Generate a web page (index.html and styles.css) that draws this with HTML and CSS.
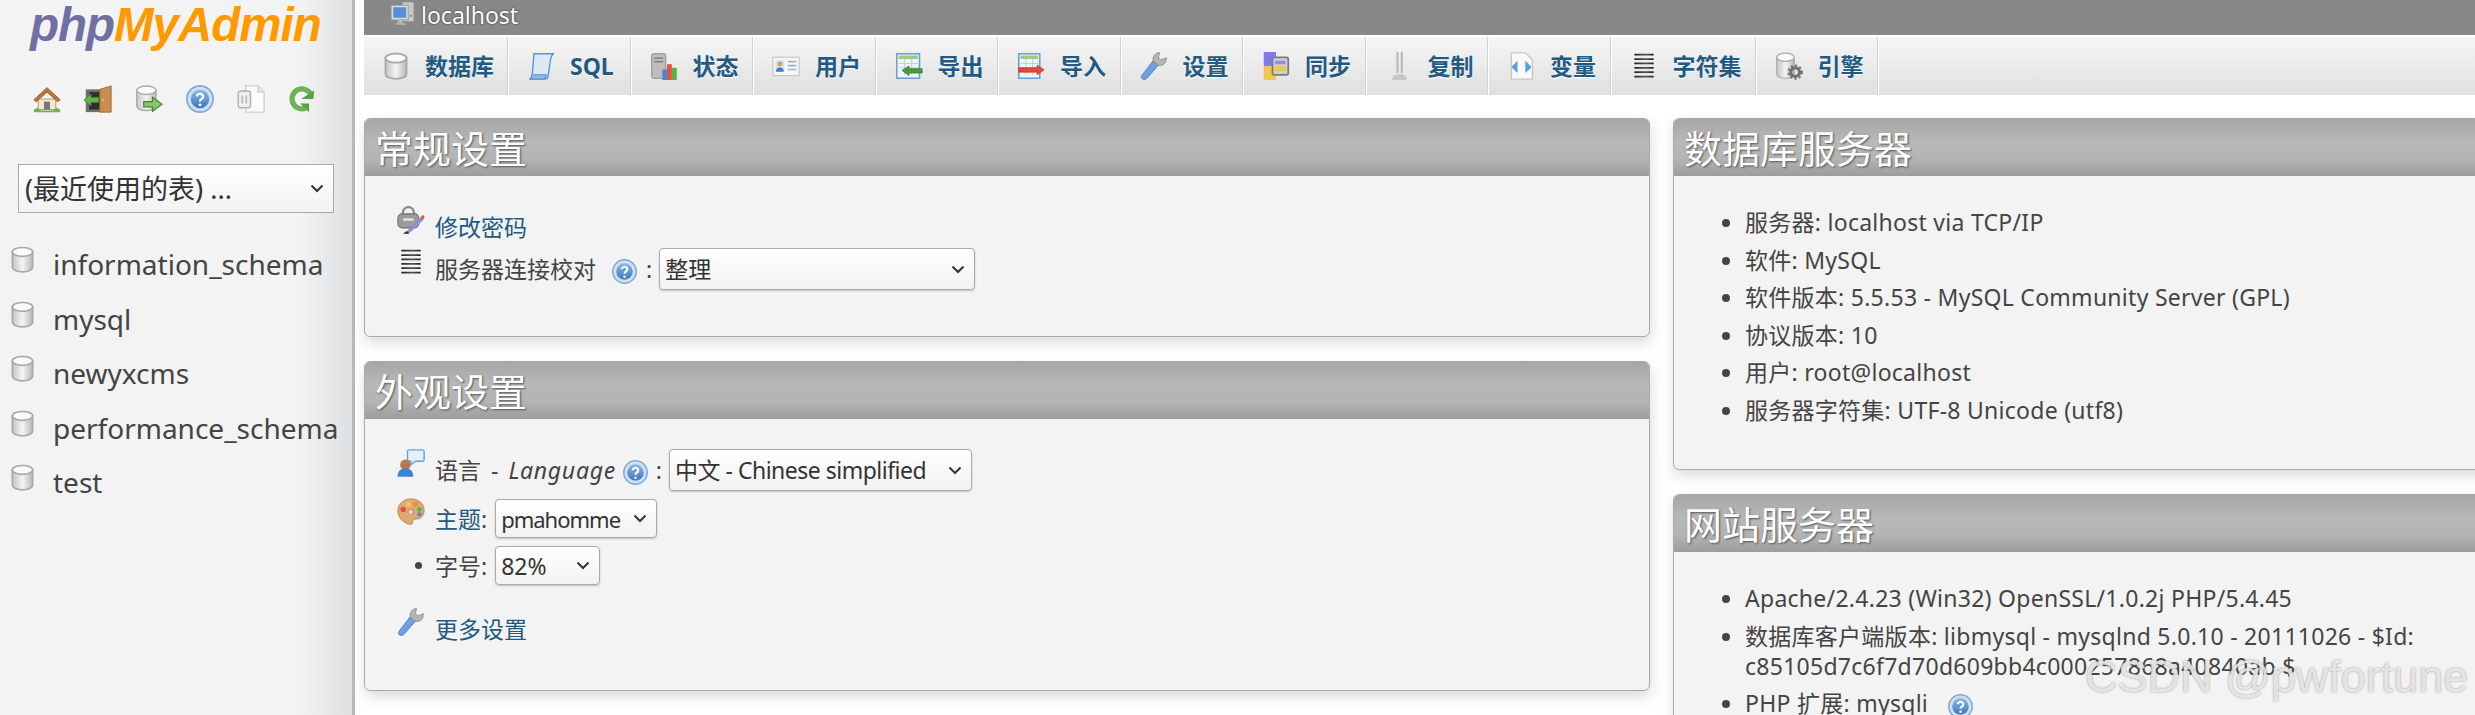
FILE: index.html
```html
<!DOCTYPE html>
<html lang="zh-CN">
<head>
    <meta charset="UTF-8">
    <title>localhost / phpMyAdmin</title>
    <link rel="stylesheet" href="styles.css">
</head>
<body>
    <svg class="icon-defs" xmlns="http://www.w3.org/2000/svg">
        <defs>
            <linearGradient id="g-db" x1="0" x2="1" y1="0" y2="0">
                <stop offset="0" stop-color="#c4c4c4"/>
                <stop offset=".5" stop-color="#f4f4f4"/>
                <stop offset="1" stop-color="#b8b8b8"/>
            </linearGradient>
            <linearGradient id="g-help" x1="0" x2="0" y1="0" y2="1">
                <stop offset="0" stop-color="#8fb8e6"/>
                <stop offset="1" stop-color="#3c78b8"/>
            </linearGradient>
            <linearGradient id="g-lines" x1="0" x2="1" y1="0" y2="0">
                <stop offset="0" stop-color="#222"/>
                <stop offset=".6" stop-color="#555"/>
                <stop offset="1" stop-color="#222"/>
            </linearGradient>
            <symbol id="i-db" viewBox="0 0 16 16">
                <path d="M2 3.500v9c0 1.600 2.700 2.800 6 2.800s6-1.200 6-2.800v-9z" fill="url(#g-db)" stroke="#a8a8a8"/>
                <ellipse cx="8" cy="3.500" rx="6" ry="2.600" fill="#fafafa" stroke="#a8a8a8"/>
            </symbol>
            <symbol id="i-home" viewBox="0 0 16 16">
                <path d="M3 8v6h10V8z" fill="#f1e7d4" stroke="#b49a72" stroke-width=".6"/>
                <path d="M0.500 8.500 8 1.500l7.500 7-1.500 1L8 4 2 9.500z" fill="#b9793c" stroke="#8d5826" stroke-width=".5"/>
                <rect x="6.300" y="9.500" width="3.400" height="4.500" fill="#777"/>
                <path d="M0.500 15.500v-1.500l2-1 2 1.500h7l2-1.500 2 1v1.500z" fill="#69b84f"/>
            </symbol>
            <symbol id="i-exit" viewBox="0 0 16 16">
                <rect x="1" y="2.500" width="9" height="13" fill="#6f6f6f"/>
                <rect x="3" y="4" width="7" height="10" fill="#2f2f2f"/>
                <path d="M9 2.500 15.500.5v15H9z" fill="#c98d50" stroke="#9a6430" stroke-width=".5"/>
                <circle cx="10.800" cy="8.500" r=".5" fill="#f7e36b"/>
                <path d="M0 8.500 4 5v2h4.500v3H4v2z" fill="#67b24a" stroke="#38802a" stroke-width=".5"/>
            </symbol>
            <symbol id="i-dbgo" viewBox="0 0 16 16">
                <path d="M1 3v9c0 1.500 2.500 2.600 5.500 2.600S12 13.500 12 12V3z" fill="url(#g-db)" stroke="#aaa" stroke-width=".8"/>
                <ellipse cx="6.500" cy="3" rx="5.500" ry="2.400" fill="#fafafa" stroke="#aaa" stroke-width=".8"/>
                <path d="M5 9.500h5V7l5.500 4-5.500 4v-2.500H5z" fill="#8cc46c" stroke="#3f8a2c" stroke-width=".7"/>
            </symbol>
            <symbol id="i-help" viewBox="0 0 16 16">
                <circle cx="8" cy="8" r="7.500" fill="#cfe0f2" stroke="#7fa9d8"/>
                <circle cx="8" cy="8" r="5.300" fill="url(#g-help)"/>
                <path d="M6.200 6.500a1.800 1.600 0 1 1 2.700 1.500c-.7.400-.9.700-.9 1.400" fill="none" stroke="#fff" stroke-width="1.300"/>
                <circle cx="8" cy="11.300" r=".8" fill="#fff"/>
            </symbol>
            <symbol id="i-copy" viewBox="0 0 16 16">
                <path d="M5 .5h7l3.500 3.500v11.500H5z" fill="#fbfbfb" stroke="#c9d2da" stroke-width=".8"/>
                <path d="M12 .5V4h3.500" fill="#e6e6e6" stroke="#c9d2da" stroke-width=".8"/>
                <rect x=".7" y="3.500" width="7" height="9.500" rx="1.300" fill="#efefef" stroke="#b5b5b5" stroke-width=".9"/>
                <path d="M3 6v4.500M5.300 6v4.500" stroke="#bbb"/>
            </symbol>
            <symbol id="i-reload" viewBox="0 0 16 16">
                <path d="M13 5.200A5.700 5.700 0 1 0 10 13.300" fill="none" stroke="#6cb257" stroke-width="3"/>
                <path d="M7.500 8h7L15 3zM7 10.500l5 5v-5z" fill="#58a246"/>
            </symbol>
            <symbol id="i-server" viewBox="0 0 16 16">
                <rect x="8" y="0" width="7" height="12" fill="#c9c9c9" stroke="#999" stroke-width=".5"/>
                <rect x="1" y="2" width="10.500" height="9" fill="#dcdcdc" stroke="#9a9a9a" stroke-width=".6"/>
                <rect x="2.300" y="3.200" width="8" height="6.500" fill="#5a8fd6"/>
                <path d="M5 11h3v2h2v1H3.500v-1H5z" fill="#b5b5b5"/>
                <circle cx="13.200" cy="8.500" r=".7" fill="#57b04a"/>
            </symbol>
            <symbol id="i-sql" viewBox="0 0 16 16">
                <path d="M4 1h11c-.8.800-1.300 1.600-1.500 3L12 14c-.3 1-1 1.500-2 1.500H1.500c1-.5 1.300-1.300 1.500-2.500z" fill="#dbe9f8" stroke="#5a93cf" stroke-width=".8"/>
                <path d="M1.500 15.500c1-.5 1.300-1.500 1.500-2.500h8l-.3 1c-.2 1-1 1.500-1.700 1.500z" fill="#8db8e4" stroke="#5a93cf" stroke-width=".6"/>
            </symbol>
            <symbol id="i-status" viewBox="0 0 16 16">
                <rect x="1" y="1" width="8" height="14" rx="1" fill="#bdbdbd" stroke="#8f8f8f" stroke-width=".6"/>
                <path d="M2.500 3.500h5M2.500 5.500h5" stroke="#777" stroke-width=".7"/>
                <rect x="7" y="10" width="2.700" height="6" fill="#4a86d8"/>
                <rect x="9.700" y="7" width="2.800" height="9" fill="#e2533f"/>
                <rect x="12.500" y="9" width="2.800" height="7" fill="#55b14a"/>
            </symbol>
            <symbol id="i-user" viewBox="0 0 16 16">
                <rect x=".5" y="3" width="15" height="10.500" fill="#f6f6f6" stroke="#c8c8c8" stroke-width=".7"/>
                <rect x="2" y="4.800" width="5" height="6.500" fill="#cfe0ee"/>
                <circle cx="4.500" cy="6.800" r="1.400" fill="#dd9a5a"/>
                <path d="M2.300 11.300c0-1.600 1-2.400 2.200-2.400s2.200.8 2.200 2.400z" fill="#3f7cc4"/>
                <path d="M9 5.500h5M9 7.800h5M9 10h5" stroke="#9db4c8" stroke-width=".9"/>
            </symbol>
            <symbol id="i-export" viewBox="0 0 16 16">
                <rect x="1" y="1" width="13" height="14" fill="#eef5fb" stroke="#6b9fd4" stroke-width=".9"/>
                <rect x="2" y="2" width="11" height="2" fill="#9ccc84"/>
                <path d="M2 6.500h11M2 9h11M5.500 4v9M9.500 4v9" stroke="#b5c9dc" stroke-width=".5"/>
                <path d="M4 10.500 8 8v1.500h7.500v2.500H8v1.500z" fill="#4f9a3a" stroke="#2f7a24" stroke-width=".4"/>
            </symbol>
            <symbol id="i-import" viewBox="0 0 16 16">
                <rect x="1" y="1" width="12" height="14" fill="#eef5fb" stroke="#6b9fd4" stroke-width=".9"/>
                <rect x="2" y="2" width="10" height="2" fill="#9ccc84"/>
                <path d="M2 6.500h10M2 9h10M5 4v9M9 4v9" stroke="#b5c9dc" stroke-width=".5"/>
                <path d="M1 9h10.500V7.500l4 2.700-4 2.800V11.500H1z" fill="#e24a3b" stroke="#b92f22" stroke-width=".4"/>
            </symbol>
            <symbol id="i-wrench" viewBox="0 0 16 16">
                <path d="M1 13.500 7.500 5l3 2.500L4 15c-1.500 1.500-4 .3-3-1.500z" fill="#6f9fe0" stroke="#4f7fc0" stroke-width=".5"/>
                <path d="M7.500 5c-.4-2 .8-4.500 3.700-4.700L10.500 3l1.500 1.500 3-1.200c.3 3-2 5-4.700 4.300z" fill="#b5b5b5" stroke="#8c8c8c" stroke-width=".5"/>
            </symbol>
            <symbol id="i-sync" viewBox="0 0 16 16">
                <rect x="1" y="0" width="7" height="8" fill="#7f7af0"/>
                <rect x="1" y="8" width="7" height="8" fill="#f0c64f"/>
                <rect x="6" y="3" width="9" height="10" rx="1" fill="#cfcfcf" stroke="#7c7c7c"/>
                <rect x="7.500" y="5" width="6" height="2" fill="#8f8af0"/>
                <rect x="7.500" y="8" width="6" height="3" fill="#f0c64f"/>
            </symbol>
            <symbol id="i-repl" viewBox="0 0 16 16">
                <path d="M6.500 0h1.200v12H6.500zM9 0h1.200v12H9z" fill="#b9b9b9"/>
                <path d="M4 16c0-2 1.500-3.500 4.300-3.500S12.500 14 12.500 16z" fill="#c7c7c7"/>
            </symbol>
            <symbol id="i-vars" viewBox="0 0 16 16">
                <path d="M2.500 .5h8l4 4v11h-12z" fill="#fafafa" stroke="#c8c8c8" stroke-width=".8"/>
                <path d="M6 5 2.500 8.500 6 12zM10.500 5 14 8.500 10.500 12z" fill="#4da0e8"/>
            </symbol>
            <symbol id="i-lines" viewBox="0 0 16 16">
                <path d="M2.500 1h11v1h-11zM2.500 3.500h11v1h-11zM2.500 6h11v1h-11zM2.500 8.500h11v1h-11zM2.500 11h11v1h-11zM2.500 13.500h11v1h-11z" fill="url(#g-lines)"/>
            </symbol>
            <symbol id="i-engine" viewBox="0 0 16 16">
                <path d="M1 3v9.500c0 1.400 2.200 2.500 5 2.500s5-1.100 5-2.500V3z" fill="url(#g-db)" stroke="#aaa" stroke-width=".7"/>
                <ellipse cx="6" cy="3" rx="5" ry="2.300" fill="#fafafa" stroke="#aaa" stroke-width=".7"/>
                <circle cx="11.500" cy="11.500" r="2.500" fill="none" stroke="#6f6f6f" stroke-width="1.800"/>
                <circle cx="11.500" cy="11.500" r="3.900" fill="none" stroke="#6f6f6f" stroke-width="1" stroke-dasharray="1.300 1.300"/>
            </symbol>
            <symbol id="i-lock" viewBox="0 0 16 16">
                <path d="M3.300 5V3.800a3.200 3.200 0 0 1 6.400 0V5" fill="none" stroke="#8a8a8a" stroke-width="1.300"/>
                <rect x=".5" y="4.500" width="12" height="8" rx="2.500" fill="#9c9c9c" stroke="#6d6d6d" stroke-width=".6"/>
                <rect x="3.500" y="7" width="6" height="1.500" fill="#e0e0e0"/>
                <path d="M5 15 13.500 6.500l1.500 1.500L7 15.500z" fill="#8f8fd8"/>
                <path d="M13.300 6.700l1.500-1.700 1 1.300-1 1.800z" fill="#e2533f"/>
                <path d="M3.500 15.800h3.500l-1.500-1.500z" fill="#222"/>
            </symbol>
            <symbol id="i-lang" viewBox="0 0 16 16">
                <path d="M6 1.500C6 .8 6.500.5 7 .5h7.500c.6 0 1 .4 1 1v4.500c0 .6-.4 1-1 1H10.500L8 9V7H7c-.6 0-1-.4-1-1z" fill="#e6f0fb" stroke="#6b9fd4" stroke-width=".8"/>
                <circle cx="4.800" cy="9" r="3" fill="#b9794a"/>
                <path d="M.3 15.800c0-3.300 1.900-4.800 4.500-4.800s4.500 1.500 4.500 4.800z" fill="#3f82d8"/>
            </symbol>
            <symbol id="i-palette" viewBox="0 0 16 16">
                <path d="M8 .5c4.500 0 7.500 2.800 7.500 6.500 0 3.500-2.300 5-4.500 5-1.300 0-2 .4-2 1.500 0 1-.8 2-2 1.500C3 14 .5 10.500.5 7.500.5 3.300 4 .5 8 .5z" fill="#dfa873" stroke="#b47f4d" stroke-width=".5"/>
                <circle cx="3.500" cy="6.500" r="1.500" fill="#e2533f"/>
                <circle cx="6.500" cy="3.500" r="1.500" fill="#f0c64f"/>
                <circle cx="10.500" cy="3.500" r="1.500" fill="#f08f3f"/>
                <circle cx="12.800" cy="6.500" r="1.400" fill="#55b14a"/>
                <circle cx="12.800" cy="9.300" r="1.200" fill="#4a86d8"/>
                <circle cx="7.800" cy="8" r="1.500" fill="#eed9bf" stroke="#a77" stroke-width=".4"/>
            </symbol>
        </defs>
    </svg>

    <div class="page">
        <aside class="sidebar">
            <div class="logo"><span class="logo-php">php</span><span class="logo-my">MyAdmin</span></div>
            <div class="quick-links">
                <svg class="icon"><use href="#i-home"/></svg>
                <svg class="icon"><use href="#i-exit"/></svg>
                <svg class="icon"><use href="#i-dbgo"/></svg>
                <svg class="icon"><use href="#i-help"/></svg>
                <svg class="icon"><use href="#i-copy"/></svg>
                <svg class="icon icon-reload"><use href="#i-reload"/></svg>
            </div>
            <select class="recent">
                <option>(最近使用的表) ...</option>
            </select>
            <ul class="db-list">
                <li><svg class="icon-db"><use href="#i-db"/></svg><a>information_schema</a></li>
                <li><svg class="icon-db"><use href="#i-db"/></svg><a>mysql</a></li>
                <li><svg class="icon-db"><use href="#i-db"/></svg><a>newyxcms</a></li>
                <li><svg class="icon-db"><use href="#i-db"/></svg><a>performance_schema</a></li>
                <li><svg class="icon-db"><use href="#i-db"/></svg><a>test</a></li>
            </ul>
        </aside>

        <main class="main">
            <div class="serverbar">
                <svg class="icon-server"><use href="#i-server"/></svg>
                <span>localhost</span>
            </div>
            <nav class="tabs">
                <a class="tab"><svg class="icon"><use href="#i-db"/></svg>数据库</a>
                <a class="tab"><svg class="icon"><use href="#i-sql"/></svg>SQL</a>
                <a class="tab"><svg class="icon"><use href="#i-status"/></svg>状态</a>
                <a class="tab"><svg class="icon"><use href="#i-user"/></svg>用户</a>
                <a class="tab"><svg class="icon"><use href="#i-export"/></svg>导出</a>
                <a class="tab"><svg class="icon"><use href="#i-import"/></svg>导入</a>
                <a class="tab"><svg class="icon"><use href="#i-wrench"/></svg>设置</a>
                <a class="tab"><svg class="icon"><use href="#i-sync"/></svg>同步</a>
                <a class="tab"><svg class="icon"><use href="#i-repl"/></svg>复制</a>
                <a class="tab"><svg class="icon"><use href="#i-vars"/></svg>变量</a>
                <a class="tab"><svg class="icon"><use href="#i-lines"/></svg>字符集</a>
                <a class="tab"><svg class="icon"><use href="#i-engine"/></svg>引擎</a>
            </nav>

            <div class="columns">
                <div class="column">
                    <section class="panel">
                        <h2>常规设置</h2>
                        <div class="panel-body">
                            <div class="row">
                                <svg class="icon"><use href="#i-lock"/></svg>
                                <a class="link">修改密码</a>
                            </div>
                            <div class="row">
                                <svg class="icon"><use href="#i-lines"/></svg>
                                <span>服务器连接校对</span>
                                <svg class="icon-help help-collation"><use href="#i-help"/></svg>
                                <span class="colon">:</span>
                                <select class="select-collation"><option>整理</option></select>
                            </div>
                        </div>
                    </section>

                    <section class="panel">
                        <h2>外观设置</h2>
                        <div class="panel-body panel-body-tight">
                            <div class="row">
                                <svg class="icon"><use href="#i-lang"/></svg>
                                <span class="lang-label">语言 - <em>Language</em></span>
                                <svg class="icon-help help-lang"><use href="#i-help"/></svg>
                                <span class="colon">:</span>
                                <select class="select-lang"><option>中文 - Chinese simplified</option></select>
                            </div>
                            <div class="row row-short">
                                <svg class="icon"><use href="#i-palette"/></svg>
                                <a class="link">主题</a><span>:</span>
                                <select class="select-theme"><option>pmahomme</option></select>
                            </div>
                            <div class="row row-short">
                                <span class="dot-cell"><i class="dot"></i></span>
                                <span>字号:</span>
                                <select class="select-size"><option>82%</option></select>
                            </div>
                            <div class="row row-more">
                                <svg class="icon"><use href="#i-wrench"/></svg>
                                <a class="link">更多设置</a>
                            </div>
                        </div>
                    </section>
                </div>

                <div class="column">
                    <section class="panel">
                        <h2>数据库服务器</h2>
                        <div class="panel-body panel-body-info">
                            <ul class="info">
                                <li>服务器: localhost via TCP/IP</li>
                                <li>软件: MySQL</li>
                                <li>软件版本: 5.5.53 - MySQL Community Server (GPL)</li>
                                <li>协议版本: 10</li>
                                <li>用户: root@localhost</li>
                                <li>服务器字符集: UTF-8 Unicode (utf8)</li>
                            </ul>
                        </div>
                    </section>

                    <section class="panel">
                        <h2>网站服务器</h2>
                        <div class="panel-body panel-body-info">
                            <ul class="info">
                                <li>Apache/2.4.23 (Win32) OpenSSL/1.0.2j PHP/5.4.45</li>
                                <li>数据库客户端版本: libmysql - mysqlnd 5.0.10 - 20111026 - $Id: c85105d7c6f7d70d609bb4c000257868a40840ab $</li>
                                <li>PHP 扩展: mysqli <svg class="icon-help help-php"><use href="#i-help"/></svg></li>
                            </ul>
                        </div>
                    </section>
                </div>
            </div>
        </main>
    </div>

    <div class="watermark">CSDN @pwfortune</div>
</body>
</html>
```

FILE: styles.css
```css
html, body {
    height: 100%;
    margin: 0;
    overflow: hidden;
}
body {
    font-family: "Noto Sans", "Noto Sans CJK SC", sans-serif;
    font-size: 23px;
    line-height: 30px;
    color: #444;
    background: #fff;
}
.icon-defs {
    width: 0;
    height: 0;
    position: absolute;
}
.page {
    display: flex;
    height: 715px;
}

/* sidebar */
.sidebar {
    flex: none;
    box-sizing: border-box;
    width: 355px;
    height: 715px;
    background: linear-gradient(to right, #f3f3f3 85%, #dfe1e2 99%);
    border-right: 3px solid #b9b9b9;
}
.logo {
    padding: 0 0 0 30px;
    height: 56px;
    font-family: "Liberation Sans", sans-serif;
    font-style: italic;
    font-weight: bold;
    font-size: 47.500px;
    line-height: 50px;
    letter-spacing: -1px;
    white-space: nowrap;
}
.logo-php {
    color: #6f6fa4;
}
.logo-my {
    color: #ff9900;
}
.quick-links {
    display: flex;
    justify-content: space-between;
    padding: 29px 36px 0 33px;
    height: 28px;
}
.icon-reload {
    width: 26px;
}
.db-list {
    list-style: none;
    margin: 24px 0 0;
    padding: 0 0 0 9px;
    font-size: 28px;
}
.db-list li {
    display: flex;
    height: 54.600px;
    line-height: 54px;
    white-space: nowrap;
}
.db-list a {
    color: #444;
}
.icon-db {
    flex: none;
    width: 27px;
    height: 27px;
    margin: 9px 17px 0 0;
}

/* top */
.main {
    flex: 1;
    min-width: 0;
    padding-left: 9px;
    overflow: hidden;
}
.serverbar {
    display: flex;
    align-items: center;
    box-sizing: border-box;
    height: 35px;
    padding: 0 0 5px 25px;
    background: #888;
    color: #fff;
    text-shadow: 0 0 2px #222;
}
.icon-server {
    width: 27px;
    height: 26px;
    margin: -1px 5px 0 0;
}
.tabs {
    display: flex;
    height: 58px;
    margin-top: 2px;
    background: linear-gradient(#f6f6f6, #dfdfdf);
}
.tab {
    display: flex;
    align-items: center;
    box-sizing: border-box;
    min-width: 122.500px;
    padding: 0 15px 0 18px;
    box-shadow: inset -1px 0 0 #fff, inset -2px 0 0 #d2d2d2;
    font-weight: bold;
    color: #235a81;
    text-shadow: 0 1px 0 #fff;
    white-space: nowrap;
}
.tab .icon {
    margin-right: 15px;
}
.icon {
    flex: none;
    width: 28px;
    height: 28px;
}

/* panels */
.columns {
    display: grid;
    grid-template-columns: 1286px 900px;
    gap: 23px;
    margin-top: 23px;
    padding-bottom: 30px;
}
.column {
    display: flex;
    flex-direction: column;
    align-items: stretch;
    gap: 24px;
}
.panel {
    box-sizing: border-box;
    background: #f3f3f3;
    border: 1px solid #aaa;
    border-radius: 6px;
    box-shadow: 1px 6px 14px rgba(0, 0, 0, .14);
}
.panel h2 {
    height: 57px;
    margin: 0;
    padding-left: 10px;
    border-radius: 5px 5px 0 0;
    font-size: 38px;
    font-weight: normal;
    line-height: 58px;
    color: #fff;
    text-shadow: 1px 1px 2px #555;
    background: linear-gradient(#a6a6a6, #b8b8b8 40%, #b4b4b4 70%, #9c9c9c);
}
.panel-body {
    padding: 30px 0 46px 32px;
}
.panel-body-tight {
    padding-bottom: 40px;
}
.panel-body-info {
    padding-bottom: 37px;
}
.row {
    display: flex;
    align-items: center;
    height: 42px;
    white-space: nowrap;
}
.row > .icon {
    margin: -14px 10px 0 0;
}
.row-short {
    height: 39px;
    margin-top: 8px;
}
.row-more {
    margin-top: 23px;
}
.link {
    color: #235a81;
}
.colon {
    margin: 0 7px 0 0;
}
.icon-help {
    flex: none;
    width: 25px;
    height: 27px;
}
.help-collation {
    margin: 4px 9px 0 16px;
}
.lang-label {
    word-spacing: 4px;
}
.lang-label em {
    letter-spacing: .7px;
}
.help-lang {
    margin: 4px 8px 0 7px;
}
.help-php {
    vertical-align: -8px;
    margin-left: 14px;
}
.dot-cell {
    display: flex;
    justify-content: center;
    width: 28px;
    margin-right: 10px;
}
.dot {
    width: 7px;
    height: 7px;
    border-radius: 50%;
    background: #444;
    margin-left: 14px;
}
select {
    appearance: none;
    box-sizing: border-box;
    height: 100%;
    font: inherit;
    color: #333;
    background:
        url("data:image/svg+xml,%3Csvg xmlns='http://www.w3.org/2000/svg' width='14' height='9'%3E%3Cpath d='M1.500 1.500l5.500 5.500 5.500-5.500' fill='none' stroke='%23333' stroke-width='2'/%3E%3C/svg%3E") no-repeat right 9px center,
        linear-gradient(#fff, #f2f2f2);
    border: 1px solid #aaa;
    border-radius: 4px;
    box-shadow: 0 1px 2px rgba(0, 0, 0, .2);
    padding: 0 0 0 5px;
}
.recent {
    display: block;
    width: 316px;
    height: 49px;
    margin: 51px 0 0 18px;
    font-size: 27px;
    border-radius: 0;
    box-shadow: none;
    padding-left: 6px;
}
.select-collation { width: 316px; }
.select-lang { width: 303px; letter-spacing: -.5px; }
.select-theme { width: 162px; margin-left: 8px; letter-spacing: -1px; font-size: 22px; }
.select-size { width: 105px; margin-left: 8px; }

.info {
    margin: 0;
    padding: 1px 0 0 39px;
    letter-spacing: .27px;
}
.info li {
    margin-bottom: 7.500px;
}
.watermark {
    position: absolute;
    left: 2085px;
    top: 652px;
    font-family: "Liberation Sans", sans-serif;
    font-size: 45px;
    line-height: 50px;
    color: rgba(255, 255, 255, .75);
    text-shadow: 0 0 2px rgba(90, 90, 90, .7);
    white-space: nowrap;
}
```
